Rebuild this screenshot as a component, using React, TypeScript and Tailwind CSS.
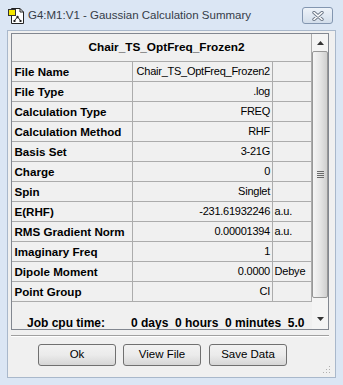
import React from "react";

const rows: [string, string, string][] = [
  ["File Name", "Chair_TS_OptFreq_Frozen2", ""],
  ["File Type", ".log", ""],
  ["Calculation Type", "FREQ", ""],
  ["Calculation Method", "RHF", ""],
  ["Basis Set", "3-21G", ""],
  ["Charge", "0", ""],
  ["Spin", "Singlet", ""],
  ["E(RHF)", "-231.61932246", "a.u."],
  ["RMS Gradient Norm", "0.00001394", "a.u."],
  ["Imaginary Freq", "1", ""],
  ["Dipole Moment", "0.0000", "Debye"],
  ["Point Group", "CI", ""],
];

function AppIcon() {
  return (
    <svg width="17" height="17" viewBox="0 0 17 17" className="shrink-0">
      <path d="M3.5 1.5H12L15.5 5V16.5H3.5Z" fill="#fff" stroke="#222" />
      <path d="M12 1.5V5H15.5" fill="none" stroke="#222" />
      <rect x="0.5" y="2.5" width="7" height="6" fill="#f4e600" stroke="#333" />
      <circle cx="9.5" cy="10" r="1.2" fill="#222" />
      <path d="M9.5 10L6.5 13.5M9.5 10L12.5 13.5" stroke="#222" strokeWidth="1" />
      <rect x="5.5" y="13" width="2" height="2" fill="#222" />
      <rect x="11.5" y="13" width="2" height="2" fill="#222" />
    </svg>
  );
}

function CloseButton() {
  return (
    <div className="ml-auto mr-[10px] flex h-[17px] w-[31px] items-center justify-center rounded-[3px] border border-[#8396b0] bg-gradient-to-b from-[#eef3f9] to-[#d3deeb]">
      <svg width="12" height="10" viewBox="0 0 12 10">
        <path d="M2 1.5L10 8.5M10 1.5L2 8.5" stroke="#6d7888" strokeWidth="3.4" strokeLinecap="round" />
        <path d="M2 1.5L10 8.5M10 1.5L2 8.5" stroke="#fff" strokeWidth="1.6" strokeLinecap="round" />
      </svg>
    </div>
  );
}

function Scrollbar() {
  return (
    <div className="flex w-[16px] flex-col bg-[#f4f4f4]">
      <div className="flex h-[17px] items-center justify-center">
        <svg width="7" height="4" viewBox="0 0 7 4">
          <path d="M0 4L3.5 0L7 4Z" fill="#333" />
        </svg>
      </div>
      <div className="flex h-[247px] items-center justify-center rounded-[2px] border border-[#979797] bg-gradient-to-r from-[#f5f5f5] via-[#e6e6e6] to-[#cfcfcf]">
        <div className="flex flex-col gap-[1px]">
          <div className="h-[1px] w-[7px] bg-[#6a6a6a]" />
          <div className="h-[1px] w-[7px] bg-[#6a6a6a]" />
          <div className="h-[1px] w-[7px] bg-[#6a6a6a]" />
          <div className="h-[1px] w-[7px] bg-[#6a6a6a]" />
        </div>
      </div>
      <div className="flex flex-1 items-center justify-center pt-[10px]">
        <svg width="7" height="4" viewBox="0 0 7 4">
          <path d="M0 0L3.5 4L7 0Z" fill="#333" />
        </svg>
      </div>
    </div>
  );
}

function Btn({ label, className }: { label: string; className: string }) {
  return (
    <div
      className={
        "flex h-[22px] w-[78px] items-center justify-center rounded-[3px] border border-[#707070] bg-gradient-to-b from-[#f2f2f2] via-[#ebebeb] to-[#d6d6d6] text-[11.5px] text-black " +
        className
      }
    >
      {label}
    </div>
  );
}

export default function App() {
  return (
    <div className="flex h-[385px] w-[343px] flex-col overflow-hidden bg-[#dbe6f4] font-['Liberation_Sans',Arial,sans-serif]">
      <div className="flex h-[30px] items-center pl-[8px] pt-[1px]">
        <AppIcon />
        <span className="ml-[3px] text-[11.5px] text-[#353c48]">
          G4:M1:V1 - Gaussian Calculation Summary
        </span>
        <CloseButton />
      </div>

      <div className="mx-[7px] flex h-[348px] flex-col border border-[#a9b8cb] bg-[#f0f0f0]">
        <div className="ml-[3px] mt-[2px] flex h-[304px] w-[318px] overflow-hidden border border-[#828790]">
          <div className="flex w-[300px] flex-col">
            <div className="flex h-[28px] shrink-0 items-center justify-center border-b border-r border-[#acacac] pl-[10px] text-[11.8px] font-bold text-black">
              Chair_TS_OptFreq_Frozen2
            </div>
            {rows.map(([k, v, u]) => (
              <div key={k} className="flex h-[20px] shrink-0 border-b border-[#acacac]">
                <div className="flex w-[121px] items-center border-r border-[#acacac] pl-[2.5px] text-[11.6px] font-bold text-black">
                  {k}
                </div>
                <div className="flex w-[140px] items-center justify-end border-r border-[#acacac] pr-[2px] text-[11px] tracking-[-0.25px] text-black">
                  {v}
                </div>
                <div className="flex w-[39px] items-center border-r border-[#acacac] pl-[1.5px] text-[11px] tracking-[-0.2px] text-black">
                  {u}
                </div>
              </div>
            ))}
            <div className="flex pt-[14px] text-[12px] font-bold leading-[14px] text-black">
              <div className="w-[119px] pl-[15px]">Job cpu time:</div>
              <div className="flex flex-col">
                <span className="whitespace-pre">0 days  0 hours  0 minutes  5.0</span>
                <span className="pl-[12px]">seconds</span>
              </div>
            </div>
          </div>
          <Scrollbar />
        </div>

        <div className="ml-[3px] mt-[5px] w-[318px] border-b border-t border-b-white border-t-[#a0a0a0]" />

        <div className="mt-[7px] flex items-center">
          <Btn label="Ok" className="ml-[30px]" />
          <Btn label="View File" className="ml-[7px]" />
          <Btn label="Save Data" className="ml-[8px]" />
        </div>

        <div className="mr-[4px] mt-auto mb-[3px] flex justify-end">
          <svg width="8" height="8" viewBox="0 0 8 8">
            <rect x="6" y="0" width="1" height="1" fill="#b0b0b0" />
            <rect x="3" y="3" width="1" height="1" fill="#b0b0b0" />
            <rect x="6" y="3" width="1" height="1" fill="#b0b0b0" />
            <rect x="0" y="6" width="1" height="1" fill="#b0b0b0" />
            <rect x="3" y="6" width="1" height="1" fill="#b0b0b0" />
            <rect x="6" y="6" width="1" height="1" fill="#b0b0b0" />
          </svg>
        </div>
      </div>
    </div>
  );
}
